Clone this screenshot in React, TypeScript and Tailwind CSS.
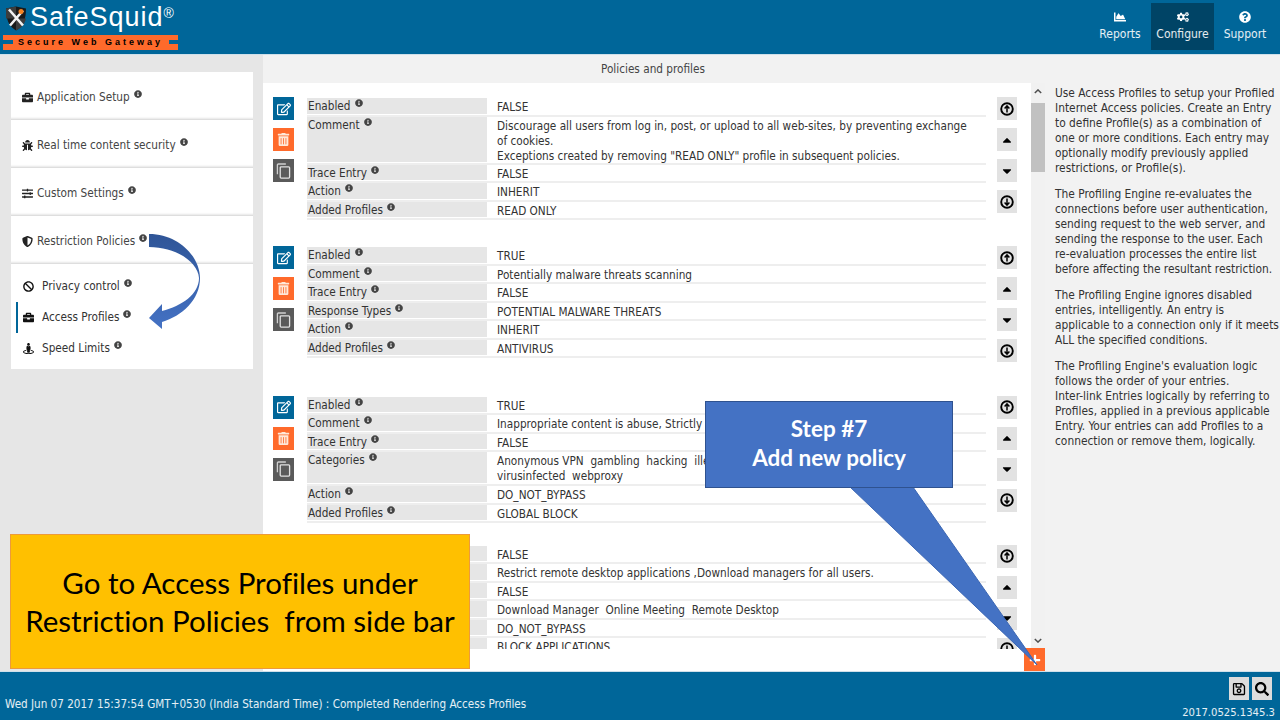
import React from "react";
import {
  FaBriefcase, FaBug, FaSlidersH, FaShieldAlt, FaBan, FaStreetView, FaChartArea, FaCogs, FaQuestionCircle,
  FaRegEdit, FaTrashAlt, FaCaretUp, FaCaretDown, FaPlus, FaRegSave, FaSearch, FaInfoCircle,
} from "react-icons/fa";

const font = "font-['DejaVu_Sans_Condensed','DejaVu_Sans',sans-serif]";

function Info() {
  return <FaInfoCircle className="inline-block ml-[4px] -mt-[7px] w-[8px] h-[8px] text-[#444]" />;
}

function Row({ label, lines, h = 18.5 }: { label: string; lines: React.ReactNode; h?: number }) {
  return (
    <div className="flex border-b-2 border-[#eeeeee] whitespace-nowrap" style={{ height: h }}>
      <div className="w-[180px] shrink-0 bg-[#e6e6e6] pl-[1px] leading-[16px] mb-[1px]">
        {label}
        <Info />
      </div>
      <div className="pl-[10px] leading-[15px] pt-[2px] min-w-0 flex-1">{lines}</div>
    </div>
  );
}

function ActL({ bg, children }: { bg: string; children: React.ReactNode }) {
  return <div className={`w-[21px] h-[23px] flex items-center justify-center text-white text-[14px] ${bg}`}>{children}</div>;
}
function ActR({ children }: { children: React.ReactNode }) {
  return <div className="w-[20px] h-[23px] bg-[#e2e2e2] flex items-center justify-center text-black text-[14px]">{children}</div>;
}
function CircleArrow({ up }: { up?: boolean }) {
  return (
    <svg viewBox="0 0 14 14" className="w-[14px] h-[14px]">
      <circle cx="7" cy="7" r="5.8" fill="none" stroke="#000" strokeWidth="1.9" />
      <path d={up ? "M7 10.5 V4 M4.6 6.4 L7 3.8 L9.4 6.4" : "M7 3.5 V10 M4.6 7.6 L7 10.2 L9.4 7.6"} fill="none" stroke="#000" strokeWidth="1.5" />
    </svg>
  );
}

function Block({ rows }: { rows: { label: string; lines: React.ReactNode; h?: number }[] }) {
  return (
    <div className="flex h-[149.3px] shrink-0 pl-[10px]">
      <div className="w-[21px] flex flex-col gap-[8px]">
        <ActL bg="bg-[#006699]"><FaRegEdit /></ActL>
        <ActL bg="bg-[#ff6a2b]"><FaTrashAlt className="text-[#ffe8d8] text-[13px]" /></ActL>
        <ActL bg="bg-[#5a5a5a]">
          <svg viewBox="0 0 16 17" className="w-[15px] h-[16px]">
            <path d="M10.5 1 H2.5 A1 1 0 0 0 1.500 2 V12" fill="none" stroke="#cfcfcf" strokeWidth="1.4" />
            <rect x="4.500" y="4" width="10" height="12" rx="1" fill="none" stroke="#e0e0e0" strokeWidth="1.4" />
          </svg>
        </ActL>
      </div>
      <div className="w-[679px] ml-[13px] pt-[1px]">
        {rows.map((r) => <Row key={r.label} {...r} />)}
      </div>
      <div className="ml-[11px] w-[20px] flex flex-col gap-[8px]">
        <ActR><CircleArrow up /></ActR>
        <ActR><FaCaretUp /></ActR>
        <ActR><FaCaretDown /></ActR>
        <ActR><CircleArrow /></ActR>
      </div>
    </div>
  );
}

function Side({ icon, label }: { icon: React.ReactNode; label: string }) {
  return (
    <div className="h-[48px] bg-white flex items-center pl-[11px] gap-[4px] pt-[3px] shadow-[inset_0_-4px_3px_-3px_rgba(0,0,0,0.2)]">
      <span className="w-[11px] text-[11px] text-[#222] flex justify-center">{icon}</span>
      <span className="text-[#444]">{label}<Info /></span>
    </div>
  );
}
function Sub({ icon, label, active }: { icon: React.ReactNode; label: string; active?: boolean }) {
  return (
    <div className={`h-[31px] flex items-center gap-[8px] pl-[5px] border-l-2 ${active ? "border-[#006699]" : "border-transparent"} ml-[5px]`}>
      <span className="w-[11px] text-[11px] text-[#111] flex justify-center">{icon}</span>
      <span className="text-[#333]">{label}<Info /></span>
    </div>
  );
}

const Blocks = [
  [
    { label: "Enabled", lines: "FALSE" },
    { label: "Comment", h: 48, lines: <>Discourage all users from log in, post, or upload to all web-sites, by preventing exchange<br />of cookies.<br />Exceptions created by removing "READ ONLY" profile in subsequent policies.</> },
    { label: "Trace Entry", lines: "FALSE" },
    { label: "Action", lines: "INHERIT" },
    { label: "Added Profiles", lines: "READ ONLY" },
  ],
  [
    { label: "Enabled", lines: "TRUE" },
    { label: "Comment", lines: "Potentially malware threats scanning" },
    { label: "Trace Entry", lines: "FALSE" },
    { label: "Response Types", lines: "POTENTIAL MALWARE THREATS" },
    { label: "Action", lines: "INHERIT" },
    { label: "Added Profiles", lines: "ANTIVIRUS" },
  ],
  [
    { label: "Enabled", lines: "TRUE" },
    { label: "Comment", lines: "Inappropriate content is abuse, Strictly block" },
    { label: "Trace Entry", lines: "FALSE" },
    { label: "Categories", h: 34, lines: <>Anonymous VPN&nbsp; gambling&nbsp; hacking&nbsp; illegal<br />virusinfected&nbsp; webproxy</> },
    { label: "Action", lines: "DO_NOT_BYPASS" },
    { label: "Added Profiles", lines: "GLOBAL BLOCK" },
  ],
  [
    { label: "Enabled", lines: "FALSE" },
    { label: "Comment", lines: "Restrict remote desktop applications ,Download managers for all users." },
    { label: "Trace Entry", lines: "FALSE" },
    { label: "Categories", lines: "Download Manager\u00a0\u00a0Online Meeting\u00a0\u00a0Remote Desktop" },
    { label: "Action", lines: "DO_NOT_BYPASS" },
    { label: "Added Profiles", lines: "BLOCK APPLICATIONS" },
  ],
];

export default function App() {
  return (
    <div className={`w-[1280px] h-[720px] relative overflow-hidden flex flex-col text-[11.7px] text-[#333] ${font}`}>
      <header className="h-[55px] shrink-0 bg-[#006699] flex justify-between border-b border-[#cfe0ea]">
        <div className="pl-[3px] pt-[3px] w-[180px]">
          <div className="flex items-start h-[32px]">
            <svg viewBox="0 0 24 26" className="w-[24px] h-[27px] mt-[2px] ml-[1px] shrink-0">
              <path d="M2 3 L12 1 L22 3 C22 14 19 21 12 25 C5 21 2 14 2 3Z" fill="#1a1a1a" />
              <path d="M2 3 L12 1 L12 13 L2 13Z" fill="#3d3d3d" />
              <path d="M12 13 L22 13 C21 18 17 23 12 25Z" fill="#3d3d3d" />
              <path d="M5 4 L19 20 M19 5 L6 20" stroke="#f2f2f2" strokeWidth="2.6" />
              <circle cx="17" cy="6" r="2.5" fill="#f58220" />
            </svg>
            <span className="ml-[2px] text-white text-[27px] leading-[29px] tracking-[1px] font-['Liberation_Sans',sans-serif]">SafeSquid</span>
            <span className="text-white text-[14px] leading-[14px] mt-[3px] font-['Liberation_Sans',sans-serif]">®</span>
          </div>
          <div className="w-[175px] h-[15px] bg-[#ff6a2b] flex items-center justify-center relative">
            <div className="absolute left-0 top-[5px] w-[10px] h-[4px] bg-[#006699]" />
            <div className="absolute right-0 top-[5px] w-[9px] h-[4px] bg-[#006699]" />
            <span className="text-black text-[9px] font-bold tracking-[3px] font-['Liberation_Sans',sans-serif]">Secure Web Gateway</span>
          </div>
        </div>
        <nav className="flex pt-[3px] pr-[4px] h-[53px]">
          {[
            { t: "Reports", i: <FaChartArea />, w: "w-[62px]" },
            { t: "Configure", i: <FaCogs />, w: "w-[63px] bg-[#004466]" },
            { t: "Support", i: <FaQuestionCircle />, w: "w-[62px]" },
          ].map((n) => (
            <div key={n.t} className={`${n.w} h-[47px] flex flex-col items-center pt-[8px] text-white/90`}>
              <span className="text-[12px] h-[13px] text-white">{n.i}</span>
              <span className="leading-[17px] mt-[2px] text-[12px]">{n.t}</span>
            </div>
          ))}
        </nav>
      </header>

      <main className="flex-1 flex min-h-0">
        <aside className="w-[263px] shrink-0 bg-[#e6e6e6] pl-[11px] pr-[10px] pt-[17px]">
          <Side icon={<FaBriefcase />} label="Application Setup" />
          <Side icon={<FaBug />} label="Real time content security" />
          <Side icon={<FaSlidersH />} label="Custom Settings" />
          <Side icon={<FaShieldAlt />} label="Restriction Policies" />
          <div className="bg-white h-[105px] pt-[7px]">
            <Sub icon={<FaBan />} label="Privacy control" />
            <Sub icon={<FaBriefcase />} label="Access Profiles" active />
            <Sub icon={<FaStreetView />} label="Speed Limits" />
          </div>
        </aside>
        <section className="flex-1 flex flex-col min-w-0 bg-[#f2f2f2]">
          <div className="h-[28px] shrink-0 pl-[338px] leading-[29px] text-[#444]">Policies and profiles</div>
          <div className="flex-1 flex min-h-0">
            <div className="w-[768px] shrink-0 bg-white flex flex-col">
              <div className="flex-1 min-h-0 overflow-hidden pt-[14px] flex flex-col">
                {Blocks.map((rows, i) => <Block key={i} rows={rows} />)}
              </div>
              <div className="h-[22px] shrink-0" />
            </div>
            <div className="w-[14px] shrink-0 relative flex flex-col items-center bg-[#f1f1f1] pt-[1px]">
              <svg viewBox="0 0 10 6" className="w-[8px] h-[5px] mt-[5px]"><path d="M1 5 L5 1 L9 5" fill="none" stroke="#505050" strokeWidth="1.8" /></svg>
              <div className="w-full h-[69px] bg-[#c1c1c1] mt-[9px]" />
              <svg viewBox="0 0 10 6" className="w-[8px] h-[5px] mt-auto mb-[28px]"><path d="M1 1 L5 5 L9 1" fill="none" stroke="#505050" strokeWidth="1.8" /></svg>
              <div className="absolute left-[-7px] bottom-0 w-[21px] h-[23px] bg-[#ff6a2b] flex items-center justify-center text-white text-[12px]"><FaPlus /></div>
            </div>
            <div className="flex-1 pl-[10px] pt-[3px] leading-[15px] text-[11.85px] text-[#333] flex flex-col gap-[11px] whitespace-nowrap">
              <p>Use Access Profiles to setup your Profiled<br />Internet Access policies. Create an Entry<br />to define Profile(s) as a combination of<br />one or more conditions. Each entry may<br />optionally modify previously applied<br />restrictions, or Profile(s).</p>
              <p>The Profiling Engine re-evaluates the<br />connections before user authentication,<br />sending request to the web server, and<br />sending the response to the user. Each<br />re-evaluation processes the entire list<br />before affecting the resultant restriction.</p>
              <p>The Profiling Engine ignores disabled<br />entries, intelligently. An entry is<br />applicable to a connection only if it meets<br />ALL the specified conditions.</p>
              <p>The Profiling Engine's evaluation logic<br />follows the order of your entries.<br />Inter-link Entries logically by referring to<br />Profiles, applied in a previous applicable<br />Entry. Your entries can add Profiles to a<br />connection or remove them, logically.</p>
            </div>
          </div>
        </section>
      </main>

      <footer className="h-[49px] shrink-0 bg-[#006699] flex justify-between border-t border-[#cfe0ea] text-white/90">
        <div className="pl-[5px] pt-[23px] leading-[18px] text-[11.6px]">Wed Jun 07 2017 15:37:54 GMT+0530 (India Standard Time) : Completed Rendering Access Profiles</div>
        <div className="flex flex-col items-end pr-[5px] pt-[5px]">
          <div className="flex gap-[3px] pr-[3px]">
            <div className="w-[20px] h-[23px] bg-[#dcdcdc] flex items-center justify-center text-black text-[14px]"><FaRegSave /></div>
            <div className="w-[20px] h-[23px] bg-[#dcdcdc] flex items-center justify-center text-black text-[14px]"><FaSearch /></div>
          </div>
          <div className="leading-[16px] mt-[5px] text-[11.2px]">2017.0525.1345.3</div>
        </div>
      </footer>

      {/* presentation overlays */}
      <svg className="absolute left-0 top-0 pointer-events-none" width="1280" height="720">
        <defs>
          <linearGradient id="cg" x1="0" y1="0" x2="0" y2="1">
            <stop offset="0" stopColor="#2f5597" />
            <stop offset="1" stopColor="#4472c4" />
          </linearGradient>
        </defs>
        <path d="M149 234 C180 234 200 258 200 278 C200 300 182 316 162 322 L162 329 L149 318 L162 304 L162 311 C182 306 199 294 199 278 C198 262 176 247 149 247 Z" fill="url(#cg)" />
        <path d="M850 487 L1037 665 L913 487 Z" fill="#4472c4" stroke="#3b66b3" strokeWidth="1" />
      </svg>
      <div className="absolute left-[705px] top-[401px] w-[248px] h-[87px] bg-[#4472c4] border border-[#2f528f] pb-[4px] flex flex-col items-center justify-center text-white text-[22.5px] leading-[29px] font-bold font-['Lato',sans-serif]">
        <div>Step #7</div>
        <div>Add new policy</div>
      </div>
      <div className="absolute left-[10px] top-[534px] w-[460px] h-[135px] bg-[#ffc000] border border-[#ed9a3a] flex flex-col items-center justify-center text-black text-[29.5px] leading-[38px] [font-variant-ligatures:none] font-['Lato',sans-serif]">
        <div>Go to Access Profiles under</div>
        <div className="whitespace-pre">Restriction Policies  from side bar</div>
      </div>
    </div>
  );
}
